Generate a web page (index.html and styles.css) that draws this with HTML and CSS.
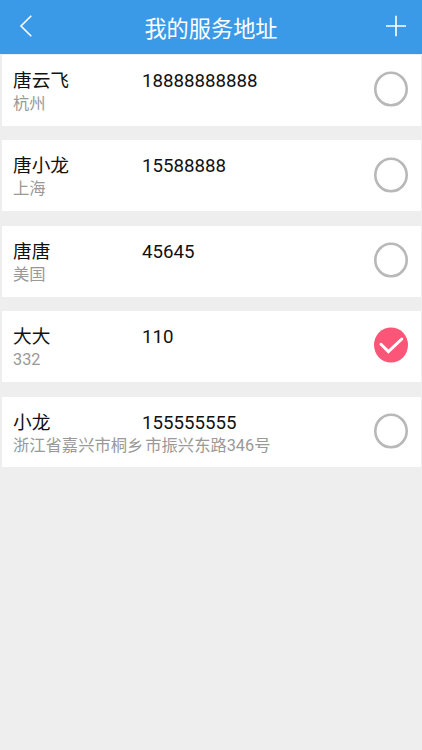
FILE: index.html
```
<!DOCTYPE html>
<html lang="zh-CN">
<head>
<meta charset="UTF-8">
<title>我的服务地址</title>
<link rel="stylesheet" href="styles.css">
</head>
<body>
<header class="navbar">
    <a class="nav-btn back">
        <svg width="14" height="24" viewBox="0 0 14 24"><path d="M12.3 1.8 L2 12 L12.3 22.2"/></svg>
    </a>
    <h1>我的服务地址</h1>
    <a class="nav-btn add">
        <svg width="22" height="22" viewBox="0 0 22 22"><path d="M11 0.7 V21.3 M1 11 H21"/></svg>
    </a>
</header>

<!-- 地址列表 -->
<div class="list">
    <div class="card">
        <div class="info">
            <div class="line"><span class="name">唐云飞</span><span class="phone">18888888888</span></div>
            <div class="address">杭州</div>
        </div>
        <svg class="radio" viewBox="0 0 34 36"><ellipse cx="17" cy="18" rx="15.7" ry="16.3"/></svg>
    </div>
    <div class="card">
        <div class="info">
            <div class="line"><span class="name">唐小龙</span><span class="phone">15588888</span></div>
            <div class="address">上海</div>
        </div>
        <svg class="radio" viewBox="0 0 34 36"><ellipse cx="17" cy="18" rx="15.7" ry="16.3"/></svg>
    </div>
    <div class="card">
        <div class="info">
            <div class="line"><span class="name">唐唐</span><span class="phone">45645</span></div>
            <div class="address">美国</div>
        </div>
        <svg class="radio" viewBox="0 0 34 36"><ellipse cx="17" cy="18" rx="15.7" ry="16.3"/></svg>
    </div>
    <div class="card">
        <div class="info">
            <div class="line"><span class="name">大大</span><span class="phone">110</span></div>
            <div class="address">332</div>
        </div>
        <svg class="radio checked" viewBox="0 0 34 36"><ellipse cx="17" cy="18" rx="17" ry="17.6"/><path d="M7 17.3 L14.4 24.6 L27.8 12"/></svg>
    </div>
    <div class="card">
        <div class="info">
            <div class="line"><span class="name">小龙</span><span class="phone">155555555</span></div>
            <div class="address">浙江省嘉兴市桐<span class="gap">乡</span>市振兴东路346号</div>
        </div>
        <svg class="radio" viewBox="0 0 34 36"><ellipse cx="17" cy="18" rx="15.7" ry="16.3"/></svg>
    </div>
</div>
</body>
</html>
```
FILE: styles.css
```
* {
    box-sizing: border-box;
}

body {
    margin: 0;
    min-height: 750px;
    background-color: #eeeeee;
    font-family: Roboto, "Noto Sans CJK SC", sans-serif;
    color: #111;
}

.navbar {
    display: flex;
    align-items: center;
    justify-content: space-between;
    height: 54px;
    padding: 0 15px 3px 19px;
    background-color: #3b9ae8;
}

.navbar h1 {
    margin: 6px 4px 0 0;
    font-size: 22.2px;
    font-weight: normal;
    line-height: 32px;
    color: #fff;
}

.nav-btn {
    display: flex;
    width: 22px;
}

.nav-btn svg {
    fill: none;
    stroke: #fff;
    stroke-width: 1.6;
}

.list {
    display: flex;
    flex-direction: column;
    gap: 14.6px;
    padding: 1px 1.5px 0 2px;
}

.card {
    display: flex;
    align-items: flex-start;
    justify-content: space-between;
    height: 70.8px;
    padding: 14px 12.5px 0 11px;
    background-color: #fff;
}

.line {
    display: flex;
    font-size: 18.7px;
    line-height: 24px;
}

.name {
    width: 129px;
}

.address {
    font-size: 16.3px;
    line-height: 22px;
    color: #999;
}

.gap {
    margin-right: 2px;
}

.radio {
    width: 34px;
    height: 36px;
    margin-top: 2.4px;
    fill: none;
    stroke: #b8b8b8;
    stroke-width: 2.6;
}

.radio.checked {
    margin-top: 1.4px;
}

.radio.checked ellipse {
    fill: #fb5578;
    stroke: none;
}

.radio.checked path {
    stroke: #fff;
    stroke-width: 3;
    stroke-linecap: round;
}
```
